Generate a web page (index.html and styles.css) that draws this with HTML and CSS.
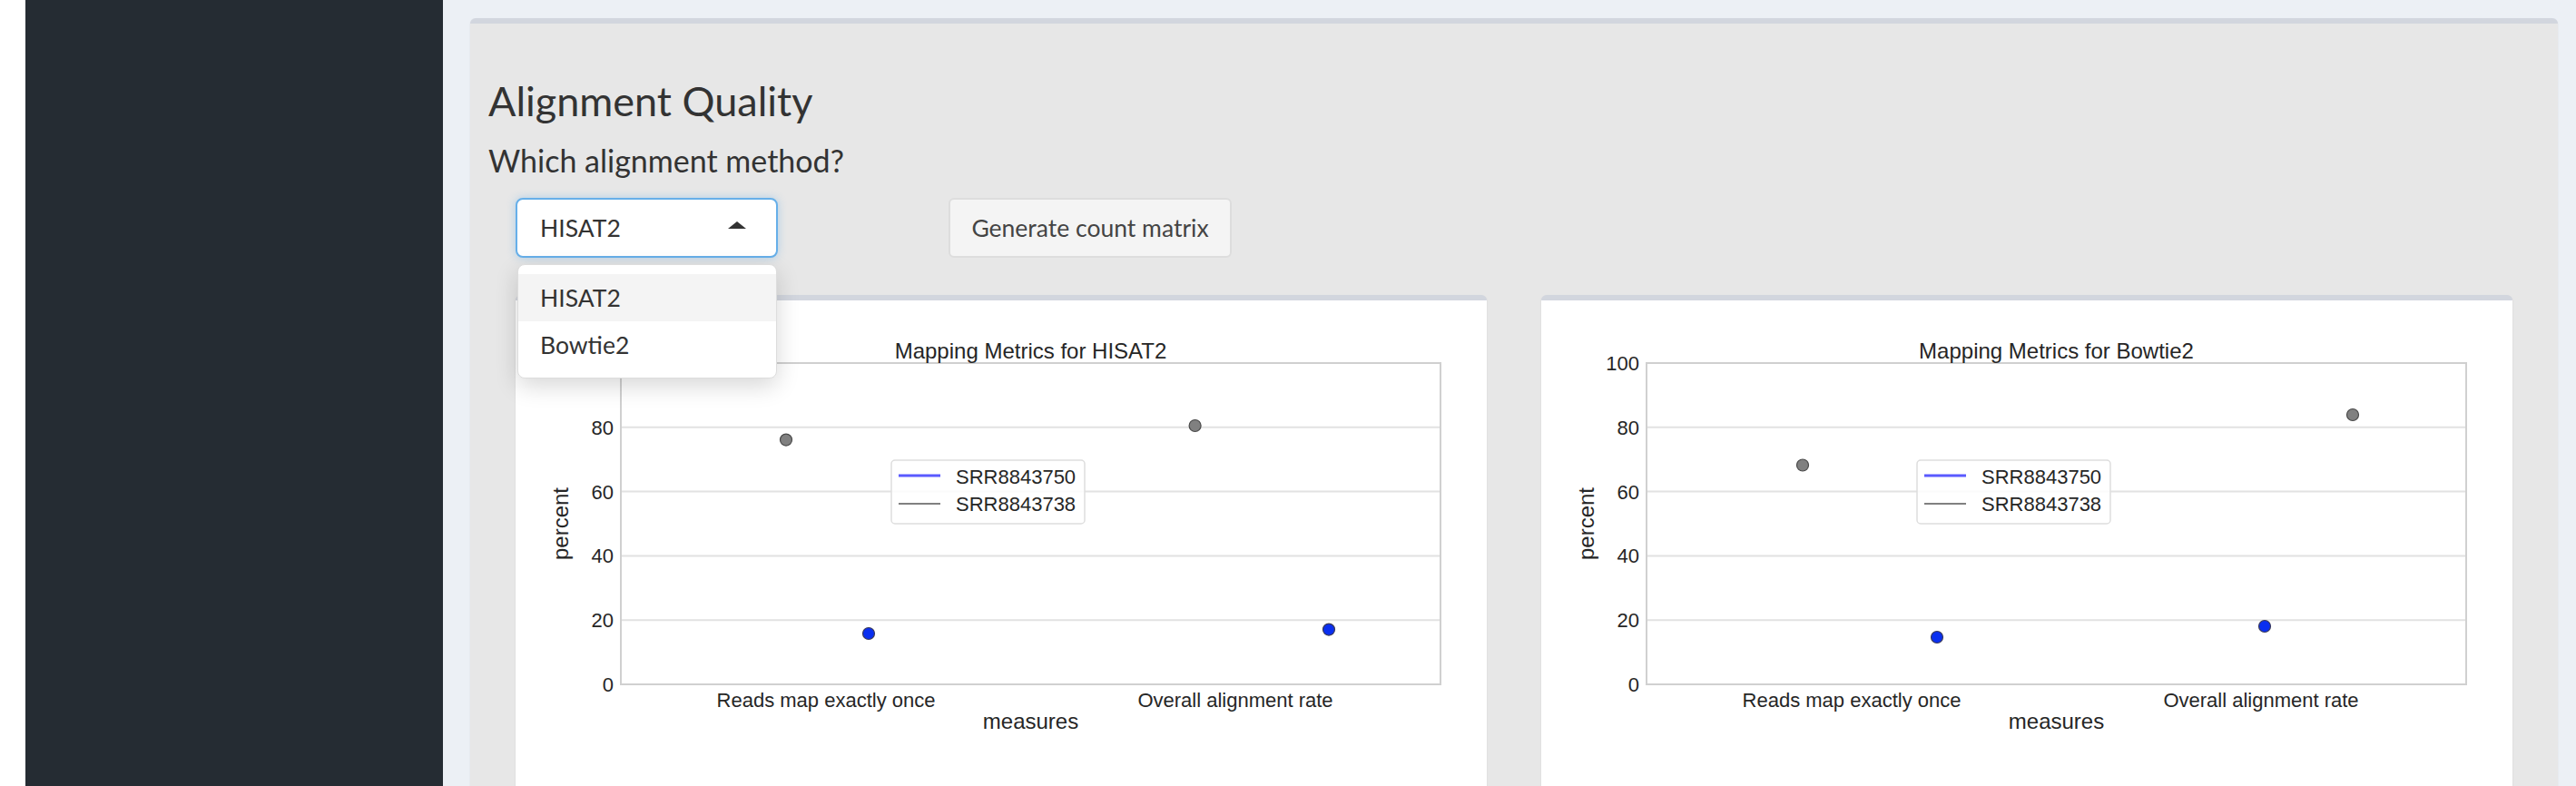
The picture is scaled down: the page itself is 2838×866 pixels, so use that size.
FILE: index.html
```html
<!DOCTYPE html>
<html lang="en">
<head>
<meta charset="utf-8">
<title>Alignment Quality</title>
<link rel="stylesheet" href="styles.css">
</head>
<body>
<div class="layout">
  <div class="gutter"></div>
  <aside class="sidebar"></aside>
  <main class="content">
    <section class="box">
      <h3 class="box-title">Alignment Quality</h3>
      <h4 class="subtitle">Which alignment method?</h4>
      <div class="controls">
        <div class="select-wrap">
          <div class="select">
            <span>HISAT2</span>
            <span class="caret"></span>
          </div>
          <ul class="dropdown">
            <li class="active">HISAT2</li>
            <li>Bowtie2</li>
          </ul>
        </div>
        <button class="btn" type="button">Generate count matrix</button>
      </div>
      <div class="plots">
        <div class="card">
          <svg class="plot" viewBox="0 0 1070 540" width="1070" height="540">
            <rect x="116" y="69" width="903" height="354" fill="#fff"/>
            <g class="grid">
              <line x1="116" x2="1019" y1="139.8" y2="139.8"/>
              <line x1="116" x2="1019" y1="210.6" y2="210.6"/>
              <line x1="116" x2="1019" y1="281.4" y2="281.4"/>
              <line x1="116" x2="1019" y1="352.2" y2="352.2"/>
            </g>
            <rect class="spine" x="116" y="69" width="903" height="354"/>
            <g class="yt">
              <text x="108" y="77">100</text>
              <text x="108" y="147.8">80</text>
              <text x="108" y="218.6">60</text>
              <text x="108" y="289.4">40</text>
              <text x="108" y="360.2">20</text>
              <text x="108" y="431">0</text>
            </g>
            <g class="xt">
              <text x="342" y="448">Reads map exactly once</text>
              <text x="793" y="448">Overall alignment rate</text>
            </g>
            <text class="lbl" x="567.5" y="472">measures</text>
            <text class="lbl" transform="translate(58 246) rotate(-90)">percent</text>
            <text class="ttl" x="567.5" y="64">Mapping Metrics for HISAT2</text>
            <circle class="pt-g" cx="298" cy="153.6" r="6.5"/>
            <circle class="pt-b" cx="389" cy="367" r="6.5"/>
            <circle class="pt-g" cx="748.6" cy="138" r="6.5"/>
            <circle class="pt-b" cx="896" cy="362.6" r="6.5"/>
            <g class="legend">
              <rect x="414" y="176" width="213" height="70" rx="4"/>
              <line class="lg-b" x1="422" x2="468" y1="193" y2="193"/>
              <line class="lg-g" x1="422" x2="468" y1="224" y2="224"/>
              <text x="485" y="202">SRR8843750</text>
              <text x="485" y="232">SRR8843738</text>
            </g>
          </svg>
        </div>
        <div class="card">
          <svg class="plot" viewBox="0 0 1070 540" width="1070" height="540">
            <rect x="116" y="69" width="903" height="354" fill="#fff"/>
            <g class="grid">
              <line x1="116" x2="1019" y1="139.8" y2="139.8"/>
              <line x1="116" x2="1019" y1="210.6" y2="210.6"/>
              <line x1="116" x2="1019" y1="281.4" y2="281.4"/>
              <line x1="116" x2="1019" y1="352.2" y2="352.2"/>
            </g>
            <rect class="spine" x="116" y="69" width="903" height="354"/>
            <g class="yt">
              <text x="108" y="77">100</text>
              <text x="108" y="147.8">80</text>
              <text x="108" y="218.6">60</text>
              <text x="108" y="289.4">40</text>
              <text x="108" y="360.2">20</text>
              <text x="108" y="431">0</text>
            </g>
            <g class="xt">
              <text x="342" y="448">Reads map exactly once</text>
              <text x="793" y="448">Overall alignment rate</text>
            </g>
            <text class="lbl" x="567.5" y="472">measures</text>
            <text class="lbl" transform="translate(58 246) rotate(-90)">percent</text>
            <text class="ttl" x="567.5" y="64">Mapping Metrics for Bowtie2</text>
            <circle class="pt-g" cx="288" cy="181.5" r="6.5"/>
            <circle class="pt-b" cx="436" cy="371" r="6.5"/>
            <circle class="pt-g" cx="894" cy="126" r="6.5"/>
            <circle class="pt-b" cx="797" cy="359" r="6.5"/>
            <g class="legend">
              <rect x="414" y="176" width="213" height="70" rx="4"/>
              <line class="lg-b" x1="422" x2="468" y1="193" y2="193"/>
              <line class="lg-g" x1="422" x2="468" y1="224" y2="224"/>
              <text x="485" y="202">SRR8843750</text>
              <text x="485" y="232">SRR8843738</text>
            </g>
          </svg>
        </div>
      </div>
    </section>
  </main>
</div>
</body>
</html>
```

FILE: styles.css
```css
html, body {
  margin: 0;
  padding: 0;
  height: 100%;
  overflow: hidden;
  background: #ffffff;
  font-family: "Lato", "Open Sans", "Liberation Sans", sans-serif;
  color: #333333;
}

.layout {
  display: flex;
  height: 866px;
}

.gutter {
  width: 28px;
  flex: none;
  background: #ffffff;
}

.sidebar {
  width: 460px;
  flex: none;
  background: #252c33;
}

.content {
  flex: 1;
  background: #ecf0f5;
  padding: 20px 20px 0 30px;
  min-width: 0;
}

.box {
  background: #e7e7e7;
  border-top: 6px solid #d2d6de;
  border-radius: 6px 6px 0 0;
  padding: 0 20px 40px;
  box-shadow: 0 1px 2px rgba(0, 0, 0, 0.08);
}

.box-title {
  margin: 57px 0 0;
  font-size: 45px;
  line-height: 56px;
  font-weight: 400;
  color: #333333;
}

.subtitle {
  margin: 16px 0 0;
  font-size: 34px;
  line-height: 44px;
  font-weight: 400;
  color: #333333;
}

.controls {
  display: flex;
  align-items: flex-start;
  margin-top: 19px;
  padding: 0 30px;
  height: 66px;
}

.select-wrap {
  position: relative;
  width: 289px;
  flex: none;
}

.select {
  box-sizing: border-box;
  height: 66px;
  display: flex;
  align-items: center;
  justify-content: space-between;
  padding: 0 33px 0 25px;
  background: #ffffff;
  border: 2px solid #66afe9;
  border-radius: 8px;
  box-shadow: 0 0 10px rgba(102, 175, 233, 0.45);
  font-size: 26.5px;
  color: #333333;
}

.caret {
  width: 0;
  height: 0;
  border-left: 10px solid transparent;
  border-right: 10px solid transparent;
  border-bottom: 8px solid #333333;
  margin-top: -6px;
}

.dropdown {
  position: absolute;
  top: 73px;
  left: 2px;
  width: 286px;
  box-sizing: border-box;
  margin: 0;
  padding: 10px 0;
  list-style: none;
  background: #ffffff;
  border: 1px solid #dddddd;
  border-radius: 8px;
  box-shadow: 0 8px 26px rgba(0, 0, 0, 0.16);
  z-index: 5;
}

.dropdown li {
  height: 52px;
  line-height: 52px;
  padding-left: 24px;
  font-size: 26.5px;
  color: #333333;
}

.dropdown li.active {
  background: #f4f4f4;
}

.btn {
  margin-left: 188px;
  box-sizing: border-box;
  height: 66px;
  width: 312px;
  padding: 0;
  background: #f4f4f4;
  border: 2px solid #dddddd;
  border-radius: 6px;
  font-family: inherit;
  font-size: 26.5px;
  color: #444444;
}

.plots {
  display: grid;
  grid-template-columns: 1070px 1070px;
  column-gap: 60px;
  margin-top: 41px;
  padding: 0 30px;
}

.card {
  background: #ffffff;
  border-top: 6px solid #d2d6de;
  border-radius: 6px 6px 0 0;
  box-shadow: 0 1px 2px rgba(0, 0, 0, 0.1);
}

.plot {
  display: block;
  font-family: "Liberation Sans", Arial, sans-serif;
}

.grid line {
  stroke: #e2e2e2;
  stroke-width: 2;
}

.spine {
  fill: none;
  stroke: #d0d0d0;
  stroke-width: 2;
}

.yt text {
  font-size: 22px;
  fill: #262626;
  text-anchor: end;
}

.xt text {
  font-size: 22px;
  fill: #262626;
  text-anchor: middle;
}

.lbl {
  font-size: 24px;
  fill: #262626;
  text-anchor: middle;
}

.ttl {
  font-size: 24px;
  fill: #262626;
  text-anchor: middle;
}

.pt-g {
  fill: #808080;
  stroke: #4a4a4a;
  stroke-width: 1.2;
}

.pt-b {
  fill: #0a2ff0;
  stroke: #3a3a5a;
  stroke-width: 1.2;
}

.legend rect {
  fill: #ffffff;
  fill-opacity: 0.85;
  stroke: #dedede;
  stroke-width: 1.5;
}

.legend text {
  font-size: 22px;
  fill: #262626;
}

.lg-b {
  stroke: #5a5aff;
  stroke-width: 3;
}

.lg-g {
  stroke: #808080;
  stroke-width: 2;
}
```
